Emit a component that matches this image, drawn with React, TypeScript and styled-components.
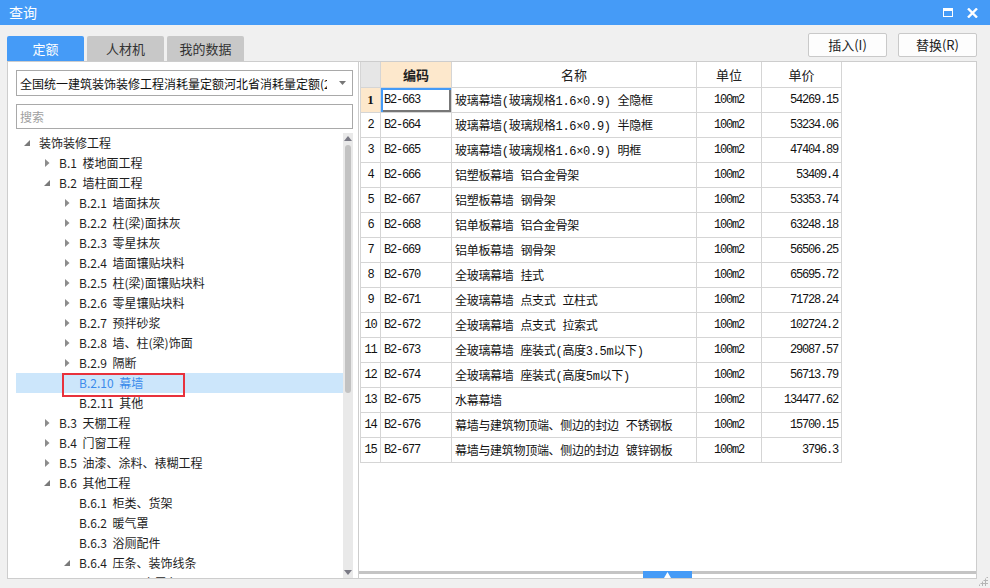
import React from "react";
import styled, { createGlobalStyle } from "styled-components";

const Global = createGlobalStyle`
  html, body { margin: 0; padding: 0; }
  body {
    width: 990px; height: 588px; overflow: hidden;
    background: #f0f0f0;
    font-family: "Noto Sans CJK SC", "Liberation Sans", sans-serif;
  }
  * { box-sizing: border-box; }
`;

const Window = styled.div`
  width: 990px; height: 588px;
  display: flex; flex-direction: column;
  background: #f0f0f0;
  position: relative;
`;

const TitleBar = styled.div`
  height: 25px; flex: none;
  background: #459bf7;
  display: flex; align-items: center;
  padding: 0 10px 0 9px;
  color: #fff; font-size: 14px; line-height: 25px;
`;
const Title = styled.div`flex: 1;`;
const TitleIcons = styled.div`
  display: flex; align-items: center; gap: 14px; margin-right: 2px;
`;
const MaxIcon = styled.div`
  width: 10px; height: 9px;
  border: 1.5px solid #fff; border-top-width: 3px;
`;

const Toolbar = styled.div`
  height: 36px; flex: none;
  display: flex; align-items: flex-end; justify-content: space-between;
  padding: 0 13px 0 7px;
`;
const Tabs = styled.div`display: flex; gap: 3px;`;
const Tab = styled.div<{ $active?: boolean }>`
  width: 77px; height: 25px;
  border-radius: 2px 2px 0 0;
  background: ${p => (p.$active ? "#459bf7" : "#c8c8c8")};
  color: ${p => (p.$active ? "#fff" : "#333")};
  font-size: 13px; line-height: 25px; text-align: center;
`;
const Buttons = styled.div`display: flex; gap: 11px; align-self: flex-start; margin-top: 8px;`;
const Button = styled.div`
  width: 79px; height: 24px;
  background: #fdfdfd; border: 1px solid #c9c9c9; border-radius: 2px;
  font-size: 13px; line-height: 22px; text-align: center; color: #222;
`;

const Main = styled.div`
  flex: none; height: 518px;
  display: flex; padding-left: 7px;
`;

const LeftPanel = styled.div`
  width: 351px;
  background: #fff;
  border: 1px solid #cdcdcd; border-right: none;
  display: flex; flex-direction: column;
  padding: 8px 5px 0 8px;
`;
const Select = styled.div`
  height: 26px; flex: none;
  border: 1px solid #a9a9a9;
  display: flex; align-items: center;
  padding: 0 6px 0 3px;
  font-size: 12px; color: #111;
`;
const SelectText = styled.div`flex: 1; overflow: hidden; white-space: nowrap; margin-right: 12px;`;
const Search = styled.div`
  height: 25px; flex: none; margin-top: 8px;
  border: 1px solid #a9a9a9;
  padding-left: 3px;
  font-size: 12px; line-height: 23px; color: #a0a0a0;
`;
const TreeWrap = styled.div`
  flex: 1; margin-top: 4px;
  display: flex; overflow: hidden;
`;
const Tree = styled.div`flex: 1; overflow: hidden;`;
const TreeRow = styled.div<{ $level: number; $selected?: boolean }>`
  height: 20px; display: flex; align-items: center;
  padding-left: ${p => p.$level * 20 + 3}px;
  background: ${p => (p.$selected ? "#cce6fb" : "transparent")};
  color: ${p => (p.$selected ? "#3b8beb" : "#1e1e1e")};
  font-size: 12px; white-space: nowrap;
`;
const ArrowSlot = styled.div`
  width: 16px; height: 20px; flex: none;
  display: flex; align-items: center; justify-content: center;
`;
const Label = styled.div<{ $marked?: boolean }>`
  margin-left: 4px; line-height: 20px;
  word-spacing: 3px;
  position: relative;
  ${p => p.$marked ? `
    &::after {
      content: ""; position: absolute;
      left: -17px; top: 0; width: 119px; height: 20px;
      border: 2px solid #e8323c;
    }
  ` : ""}
`;
const VScroll = styled.div`
  width: 10px; flex: none; background: #e9e9e9;
  display: flex; flex-direction: column; align-items: center;
  padding: 3px 0 3px;
`;
const Thumb = styled.div`
  width: 6px; height: 248px; margin-top: 4px;
  background: #c2c2c2; border-radius: 3px;
`;
const ScrollSpacer = styled.div`flex: 1;`;

const RightPanel = styled.div`
  width: 619px;
  background: #fff;
  border: 1px solid #cdcdcd;
  display: flex; flex-direction: column;
`;
const GridArea = styled.div`flex: 1; padding-left: 1px; overflow: hidden;`;
const Table = styled.table`
  border-collapse: collapse;
  table-layout: fixed;
  width: 481px;
  font-family: "Liberation Mono", "Noto Sans CJK SC", monospace;
  font-size: 12px; color: #111;
`;
const Th = styled.th<{ $bg?: string; $bold?: boolean }>`
  height: 25px; padding: 0;
  border: 1px solid #d5d5d5; border-top: none;
  background: ${p => p.$bg || "#fff"};
  font-family: "Noto Sans CJK SC", sans-serif;
  font-size: 13px; font-weight: ${p => (p.$bold ? 700 : 400)};
  color: #222;
`;
const Td = styled.td<{ $align?: string; $bg?: string; $focus?: boolean; $bold?: boolean; $tight?: boolean }>`
  height: 25px; padding: 0 3px;
  border: 1px solid #d5d5d5;
  text-align: ${p => p.$align || "left"};
  background: ${p => p.$bg || "#fff"};
  white-space: nowrap; overflow: hidden;
  font-weight: ${p => (p.$bold ? 700 : 400)};
  letter-spacing: ${p => (p.$tight ? "-1.2px" : "normal")};
  ${p => p.$bold ? `font-family: "Liberation Serif", serif; font-size: 13px;` : ""}
  ${p => p.$focus ? `box-shadow: inset 2px 2px 0 #459bf7, inset -2px -2px 0 #777;` : ""}
`;
const NameText = styled.span`
  font-family: "Liberation Mono", "Noto Sans CJK SC", monospace;
  letter-spacing: -0.3px;
`;

const Splitter = styled.div`
  height: 7px; flex: none;
  background: linear-gradient(#c4c4c4 0 3px, #fff 3px);
  display: flex; justify-content: center;
`;
const Handle = styled.div`
  width: 49px; height: 7px; background: #459bf7;
  display: flex; align-items: center; justify-content: center;
`;

const Grip = styled.div`
  position: absolute; right: 2px; bottom: 2px;
  width: 10px; height: 10px;
  background-image: radial-gradient(#b5b5b5 1px, transparent 1.2px);
  background-size: 3px 3px;
  clip-path: polygon(100% 0, 100% 100%, 0 100%);
`;

const Collapsed = () => (
  <svg width="5" height="8" viewBox="0 0 5 8"><polygon points="0,0 4.5,4 0,8" fill="#8c8c8c" /></svg>
);
const Expanded = () => (
  <svg width="6" height="6" viewBox="0 0 6 6"><polygon points="6,0 6,6 0,6" fill="#7a7a7a" /></svg>
);

type Node = { t: string; l: number; s?: "c" | "e"; sel?: boolean };
const nodes: Node[] = [
  { t: "装饰装修工程", l: 0, s: "e" },
  { t: "B.1 楼地面工程", l: 1, s: "c" },
  { t: "B.2 墙柱面工程", l: 1, s: "e" },
  { t: "B.2.1 墙面抹灰", l: 2, s: "c" },
  { t: "B.2.2 柱(梁)面抹灰", l: 2, s: "c" },
  { t: "B.2.3 零星抹灰", l: 2, s: "c" },
  { t: "B.2.4 墙面镶贴块料", l: 2, s: "c" },
  { t: "B.2.5 柱(梁)面镶贴块料", l: 2, s: "c" },
  { t: "B.2.6 零星镶贴块料", l: 2, s: "c" },
  { t: "B.2.7 预拌砂浆", l: 2, s: "c" },
  { t: "B.2.8 墙、柱(梁)饰面", l: 2, s: "c" },
  { t: "B.2.9 隔断", l: 2, s: "c" },
  { t: "B.2.10 幕墙", l: 2, sel: true },
  { t: "B.2.11 其他", l: 2 },
  { t: "B.3 天棚工程", l: 1, s: "c" },
  { t: "B.4 门窗工程", l: 1, s: "c" },
  { t: "B.5 油漆、涂料、裱糊工程", l: 1, s: "c" },
  { t: "B.6 其他工程", l: 1, s: "e" },
  { t: "B.6.1 柜类、货架", l: 2 },
  { t: "B.6.2 暖气罩", l: 2 },
  { t: "B.6.3 浴厕配件", l: 2 },
  { t: "B.6.4 压条、装饰线条", l: 2, s: "e" },
  { t: "B.6.4.1 金属条", l: 3 },
];

const rows: [string, string, string][] = [
  ["B2-663", "玻璃幕墙(玻璃规格1.6×0.9) 全隐框", "54269.15"],
  ["B2-664", "玻璃幕墙(玻璃规格1.6×0.9) 半隐框", "53234.06"],
  ["B2-665", "玻璃幕墙(玻璃规格1.6×0.9) 明框", "47404.89"],
  ["B2-666", "铝塑板幕墙 铝合金骨架", "53409.4"],
  ["B2-667", "铝塑板幕墙 钢骨架", "53353.74"],
  ["B2-668", "铝单板幕墙 铝合金骨架", "63248.18"],
  ["B2-669", "铝单板幕墙 钢骨架", "56506.25"],
  ["B2-670", "全玻璃幕墙 挂式", "65695.72"],
  ["B2-671", "全玻璃幕墙 点支式 立柱式", "71728.24"],
  ["B2-672", "全玻璃幕墙 点支式 拉索式", "102724.2"],
  ["B2-673", "全玻璃幕墙 座装式(高度3.5m以下)", "29087.57"],
  ["B2-674", "全玻璃幕墙 座装式(高度5m以下)", "56713.79"],
  ["B2-675", "水幕幕墙", "134477.62"],
  ["B2-676", "幕墙与建筑物顶端、侧边的封边 不锈钢板", "15700.15"],
  ["B2-677", "幕墙与建筑物顶端、侧边的封边 镀锌钢板", "3796.3"],
];

export default function App() {
  return (
    <Window>
      <Global />
      <TitleBar>
        <Title>查询</Title>
        <TitleIcons>
          <MaxIcon />
          <svg width="11" height="10" viewBox="0 0 11 10">
            <path d="M1 0.5 L10 9.5 M10 0.5 L1 9.5" stroke="#fff" strokeWidth="2.4" />
          </svg>
        </TitleIcons>
      </TitleBar>
      <Toolbar>
        <Tabs>
          <Tab $active>定额</Tab>
          <Tab>人材机</Tab>
          <Tab>我的数据</Tab>
        </Tabs>
        <Buttons>
          <Button>插入(I)</Button>
          <Button>替换(R)</Button>
        </Buttons>
      </Toolbar>
      <Main>
        <LeftPanel>
          <Select>
            <SelectText>全国统一建筑装饰装修工程消耗量定额河北省消耗量定额(2013)</SelectText>
            <svg width="7" height="4" viewBox="0 0 7 4"><polygon points="0,0 7,0 3.5,4" fill="#777" /></svg>
          </Select>
          <Search>搜索</Search>
          <TreeWrap>
            <Tree>
              {nodes.map((n, i) => (
                <TreeRow key={i} $level={n.l} $selected={n.sel}>
                  <ArrowSlot>
                    {n.s === "c" ? <Collapsed /> : n.s === "e" ? <Expanded /> : null}
                  </ArrowSlot>
                  <Label $marked={n.sel}>{n.t}</Label>
                </TreeRow>
              ))}
            </Tree>
            <VScroll>
              <svg width="8" height="5" viewBox="0 0 8 5"><polygon points="0,5 8,5 4,0" fill="#7a7a85" /></svg>
              <Thumb />
              <ScrollSpacer />
              <svg width="8" height="5" viewBox="0 0 8 5"><polygon points="0,0 8,0 4,5" fill="#7a7a85" /></svg>
            </VScroll>
          </TreeWrap>
        </LeftPanel>
        <RightPanel>
          <GridArea>
            <Table>
              <colgroup>
                <col style={{ width: 20 }} />
                <col style={{ width: 71 }} />
                <col style={{ width: 245 }} />
                <col style={{ width: 65 }} />
                <col style={{ width: 80 }} />
              </colgroup>
              <thead>
                <tr>
                  <Th $bg="#e6e6e6"></Th>
                  <Th $bg="#fde8cc" $bold>编码</Th>
                  <Th>名称</Th>
                  <Th>单位</Th>
                  <Th>单价</Th>
                </tr>
              </thead>
              <tbody>
                {rows.map((r, i) => (
                  <tr key={i}>
                    <Td $align="center" $bg={i === 0 ? "#fde8cc" : undefined} $bold={i === 0} $tight={i > 0}>{i + 1}</Td>
                    <Td $focus={i === 0} $tight>{r[0]}</Td>
                    <Td><NameText>{r[1]}</NameText></Td>
                    <Td $align="center" $tight>100m2</Td>
                    <Td $align="right" $tight>{r[2]}</Td>
                  </tr>
                ))}
              </tbody>
            </Table>
          </GridArea>
          <Splitter>
            <Handle>
              <svg width="7" height="6" viewBox="0 0 7 6"><polygon points="0,6 7,6 3.5,0" fill="#fff" /></svg>
            </Handle>
          </Splitter>
        </RightPanel>
      </Main>
      <Grip />
    </Window>
  );
}
